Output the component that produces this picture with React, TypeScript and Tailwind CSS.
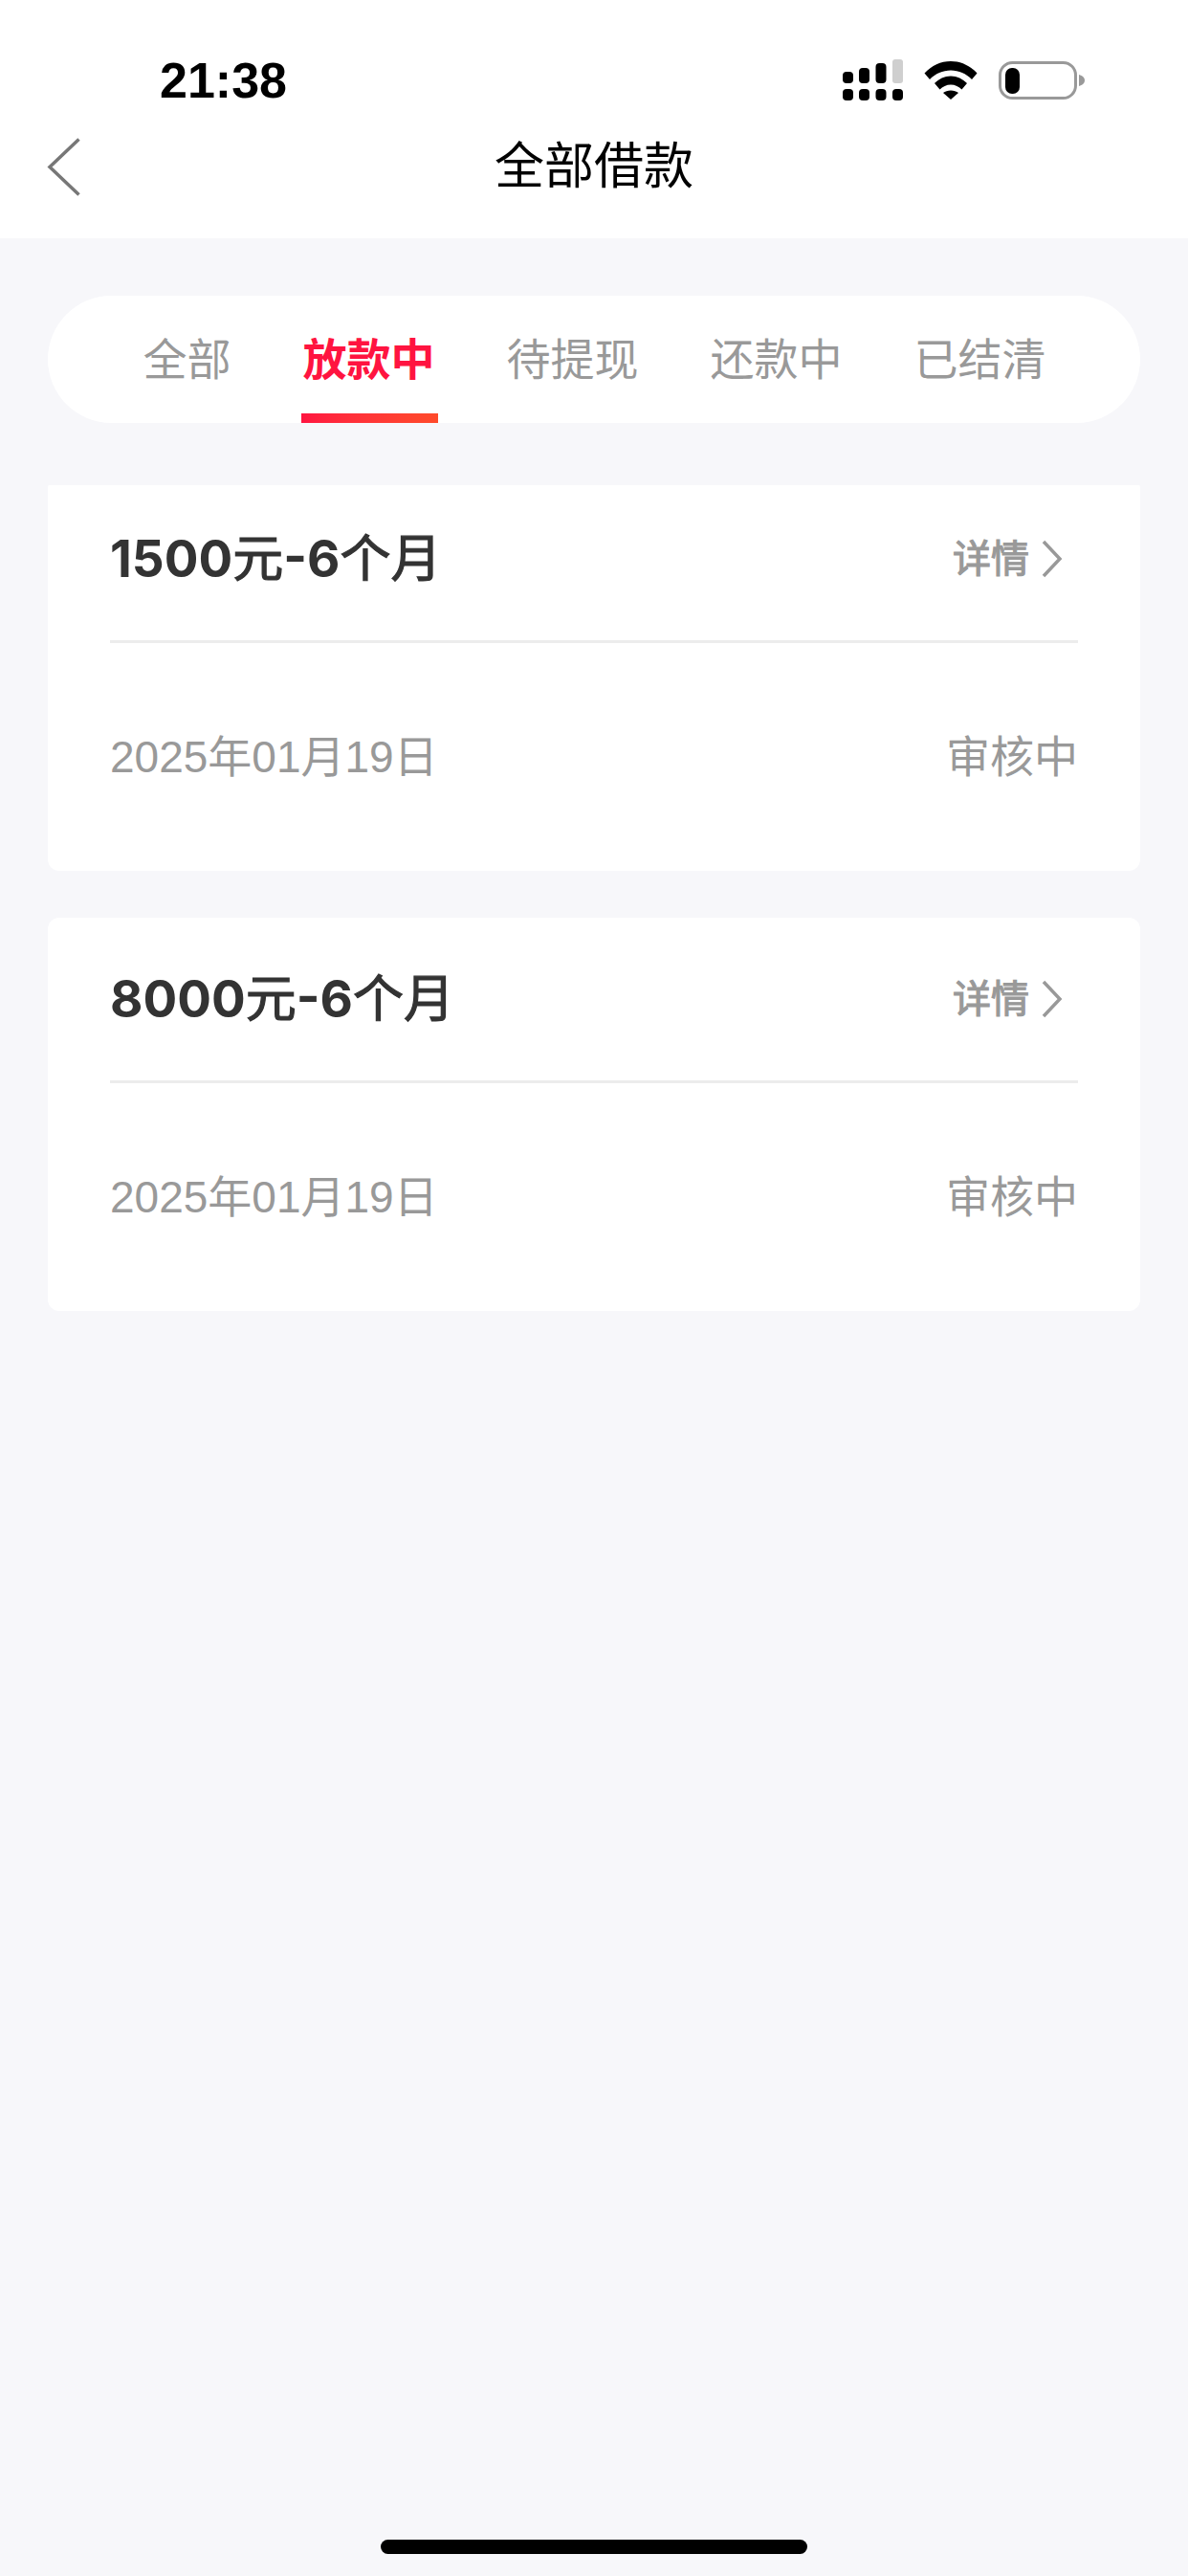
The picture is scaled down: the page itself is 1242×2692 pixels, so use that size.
const tabs = ["全部", "放款中", "待提现", "还款中", "已结清"];
const activeTab = "放款中";

const loans = [
  { amount: "1500", term: "6", date: "2025年01月19日", status: "审核中" },
  { amount: "8000", term: "6", date: "2025年01月19日", status: "审核中" },
];

function StatusIcons() {
  return (
    <div className="flex items-center gap-[22px]">
      {/* signal, two rows of dots */}
      <svg width="63" height="44" viewBox="0 0 63 44">
        <rect x="0" y="13" width="11" height="12" rx="4" fill="#000" />
        <rect x="17" y="9" width="11" height="16" rx="4" fill="#000" />
        <rect x="34.500" y="4" width="11" height="21" rx="4" fill="#000" />
        <rect x="52" y="0" width="11" height="25" rx="3" fill="#cfcfcf" />
        <rect x="0" y="31" width="11" height="12" rx="4" fill="#000" />
        <rect x="17" y="31" width="11" height="12" rx="4" fill="#000" />
        <rect x="34.500" y="31" width="11" height="12" rx="4" fill="#000" />
        <rect x="52" y="31" width="11" height="12" rx="4" fill="#000" />
      </svg>
      <svg width="56" height="40" viewBox="0 0 56 40" fill="#000">
        <path d="M0.5 12.500C8 4.500 17.500 0 28 0C38.500 0 48 4.500 55.500 12.500L50 19C44 13 36.500 9.500 28 9.500C19.500 9.500 12 13 6 19Z" />
        <path d="M11 23C15.500 18.500 21.500 15.500 28 15.500C34.500 15.500 40.500 18.500 45 23L39.500 29.500C36.500 26.500 32.500 24.500 28 24.500C23.500 24.500 19.500 26.500 16.500 29.500Z" />
        <path d="M20 33C22 31.500 25 30.500 28 30.500C31 30.500 34 31.500 36 33L28 40Z" />
      </svg>
      <svg width="90" height="40" viewBox="0 0 90 40">
        <rect x="1.500" y="1.500" width="79" height="37" rx="13" fill="#fff" stroke="#999" strokeWidth="3" />
        <rect x="7" y="7" width="15" height="27" rx="7" fill="#000" />
        <path d="M84 14C87.500 15 90 17 90 20C90 23 87.500 25 84 26Z" fill="#999" />
      </svg>
    </div>
  );
}

function LoanCard({ amount, term, date, status, first }: { amount: string; term: string; date: string; status: string; first?: boolean }) {
  return (
    <div className={`bg-white rounded-[12px] h-[411px] px-[65px] ${first ? "-mt-[8px]" : ""}`}>
      <div className="h-[170px] flex items-center justify-between border-b-[3px] border-[#ececec] box-content">
        <span className="pt-[2px] text-[53px] text-[#333] [-webkit-text-stroke:1.2px_#333]">
          <b className="font-bold [-webkit-text-stroke:0] [font-family:Inter,sans-serif]">{amount}</b>元
          <b className="font-bold [-webkit-text-stroke:0] [font-family:Inter,sans-serif]">-{term}</b>个月
        </span>
        <span className="flex items-center gap-[11px] text-[40px] text-[#999] [-webkit-text-stroke:1.2px_#999]">
          详情
          <svg width="26" height="42" viewBox="0 0 26 42" fill="none" className="mr-[14px]">
            <path d="M4 3L21 21L4 39" stroke="#999" strokeWidth="3.500" />
          </svg>
        </span>
      </div>
      <div className="h-[240px] pb-[2px] flex items-center justify-between text-[46px] text-[#999]">
        <span>{date}</span>
        <span>{status}</span>
      </div>
    </div>
  );
}

export default function App() {
  return (
    <div className="w-[1242px] h-[2692px] flex flex-col bg-[#f7f7fa] overflow-hidden [font-family:'Liberation_Sans','Noto_Sans_CJK_SC',sans-serif]">
      {/* Status bar + nav */}
      <header className="bg-white h-[249px]">
        <div className="h-[124px] pt-[44px] pl-[167px] pr-[108px] flex items-center justify-between">
          <span className="text-[52px] font-bold text-black leading-none">21:38</span>
          <StatusIcons />
        </div>
        <div className="h-[100px] grid grid-cols-[1fr_auto_1fr] items-center">
          <svg width="35" height="61" viewBox="0 0 35 61" fill="none" className="ml-[49px]">
            <path d="M33.500 1.500L3 30.500L33.500 59.500" stroke="#777" strokeWidth="3.500" />
          </svg>
          <h1 className="text-[52px] font-normal text-black">全部借款</h1>
          <div />
        </div>
      </header>

      {/* Tabs */}
      <nav className="mt-[60px] mx-[50px] h-[133px] pl-[1px] bg-white rounded-[67px] flex justify-center gap-[75px]">
        {tabs.map((tab) => (
          <div key={tab} className="relative flex items-center pt-[2px]">
            <span className={tab === activeTab ? "text-[46px] font-bold text-[#ff1440]" : "text-[46px] text-[#999]"}>{tab}</span>
            {tab === activeTab && (
              <div className="absolute -left-[2px] -right-[3px] bottom-0 h-[10px] bg-gradient-to-r from-[#ff1440] to-[#ff4a2a]" />
            )}
          </div>
        ))}
      </nav>

      {/* Loan list */}
      <div className="mt-[65px] mx-[50px] flex-1 flex flex-col gap-[49px] overflow-hidden">
        {loans.map((loan, i) => (
          <LoanCard key={loan.amount} {...loan} first={i === 0} />
        ))}
      </div>

      <div className="w-[446px] h-[15px] mx-auto mb-[23px] rounded-full bg-black" />
    </div>
  );
}
